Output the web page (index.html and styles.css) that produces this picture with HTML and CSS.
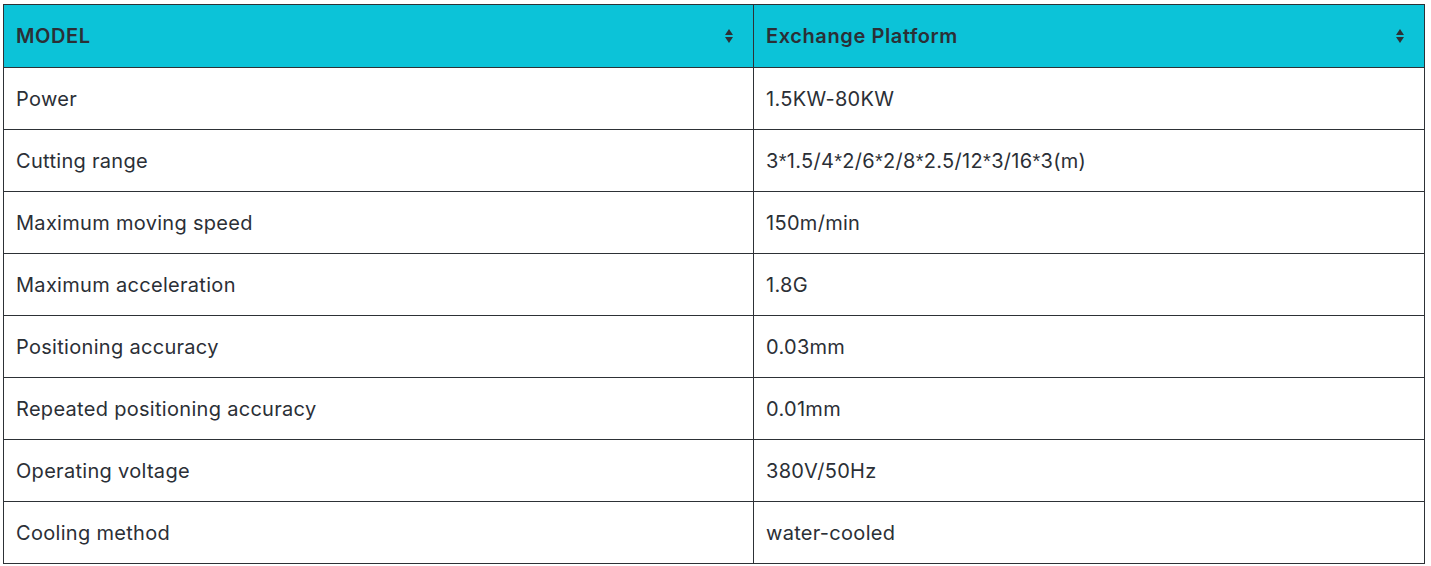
FILE: index.html
```html
<!DOCTYPE html>
<html lang="en">
<head>
<meta charset="utf-8">
<title>Specifications</title>
<link rel="stylesheet" href="styles.css">
</head>
<body>
<table class="spec">
  <colgroup><col class="c1"><col class="c2"></colgroup>
  <thead>
    <tr>
      <th><div class="th-in"><span>MODEL</span><span class="sort"></span></div></th>
      <th><div class="th-in"><span>Exchange Platform</span><span class="sort"></span></div></th>
    </tr>
  </thead>
  <tbody>
    <tr><td>Power</td><td>1.5KW-80KW</td></tr>
    <tr><td>Cutting range</td><td>3<span class="ast">*</span>1.5/4<span class="ast">*</span>2/6<span class="ast">*</span>2/8<span class="ast">*</span>2.5/12<span class="ast">*</span>3/16<span class="ast">*</span>3(m)</td></tr>
    <tr><td>Maximum moving speed</td><td>150m/min</td></tr>
    <tr><td>Maximum acceleration</td><td>1.8G</td></tr>
    <tr><td>Positioning accuracy</td><td>0.03mm</td></tr>
    <tr><td>Repeated positioning accuracy</td><td>0.01mm</td></tr>
    <tr><td>Operating voltage</td><td>380V/50Hz</td></tr>
    <tr><td>Cooling method</td><td>water-cooled</td></tr>
  </tbody>
</table>
</body>
</html>
```
FILE: styles.css
```css
html, body {
  margin: 0;
  padding: 0;
  background: #ffffff;
}
body {
  padding: 4px 0 0 3px;
  font-family: Inter, "Noto Sans", sans-serif;
  color: #2b2f36;
}
.spec {
  border-collapse: collapse;
  table-layout: fixed;
  width: 1422px;
}
.c1 { width: 750px; }
.spec th, .spec td {
  border: 1px solid #2d3136;
  padding: 0 13px 0 12px;
  text-align: left;
  font-size: 20px;
  line-height: 24px;
}
.spec th {
  background: #0cc3d8;
  font-weight: 600;
  letter-spacing: 0.6px;
  height: 62px;
}
.spec td {
  font-weight: 400;
  letter-spacing: 0.3px;
  height: 61px;
}
.ast {
  font-family: "Liberation Sans", sans-serif;
}
.th-in {
  display: flex;
  align-items: center;
  justify-content: space-between;
}
.sort {
  width: 9px;
  height: 14px;
  margin-right: 6px;
  position: relative;
}
.sort::before, .sort::after {
  content: "";
  position: absolute;
  left: 0;
  border-left: 4.5px solid transparent;
  border-right: 4.5px solid transparent;
}
.sort::before {
  top: 0;
  border-bottom: 6px solid #2d3136;
}
.sort::after {
  bottom: 0;
  border-top: 6px solid #2d3136;
}
```
